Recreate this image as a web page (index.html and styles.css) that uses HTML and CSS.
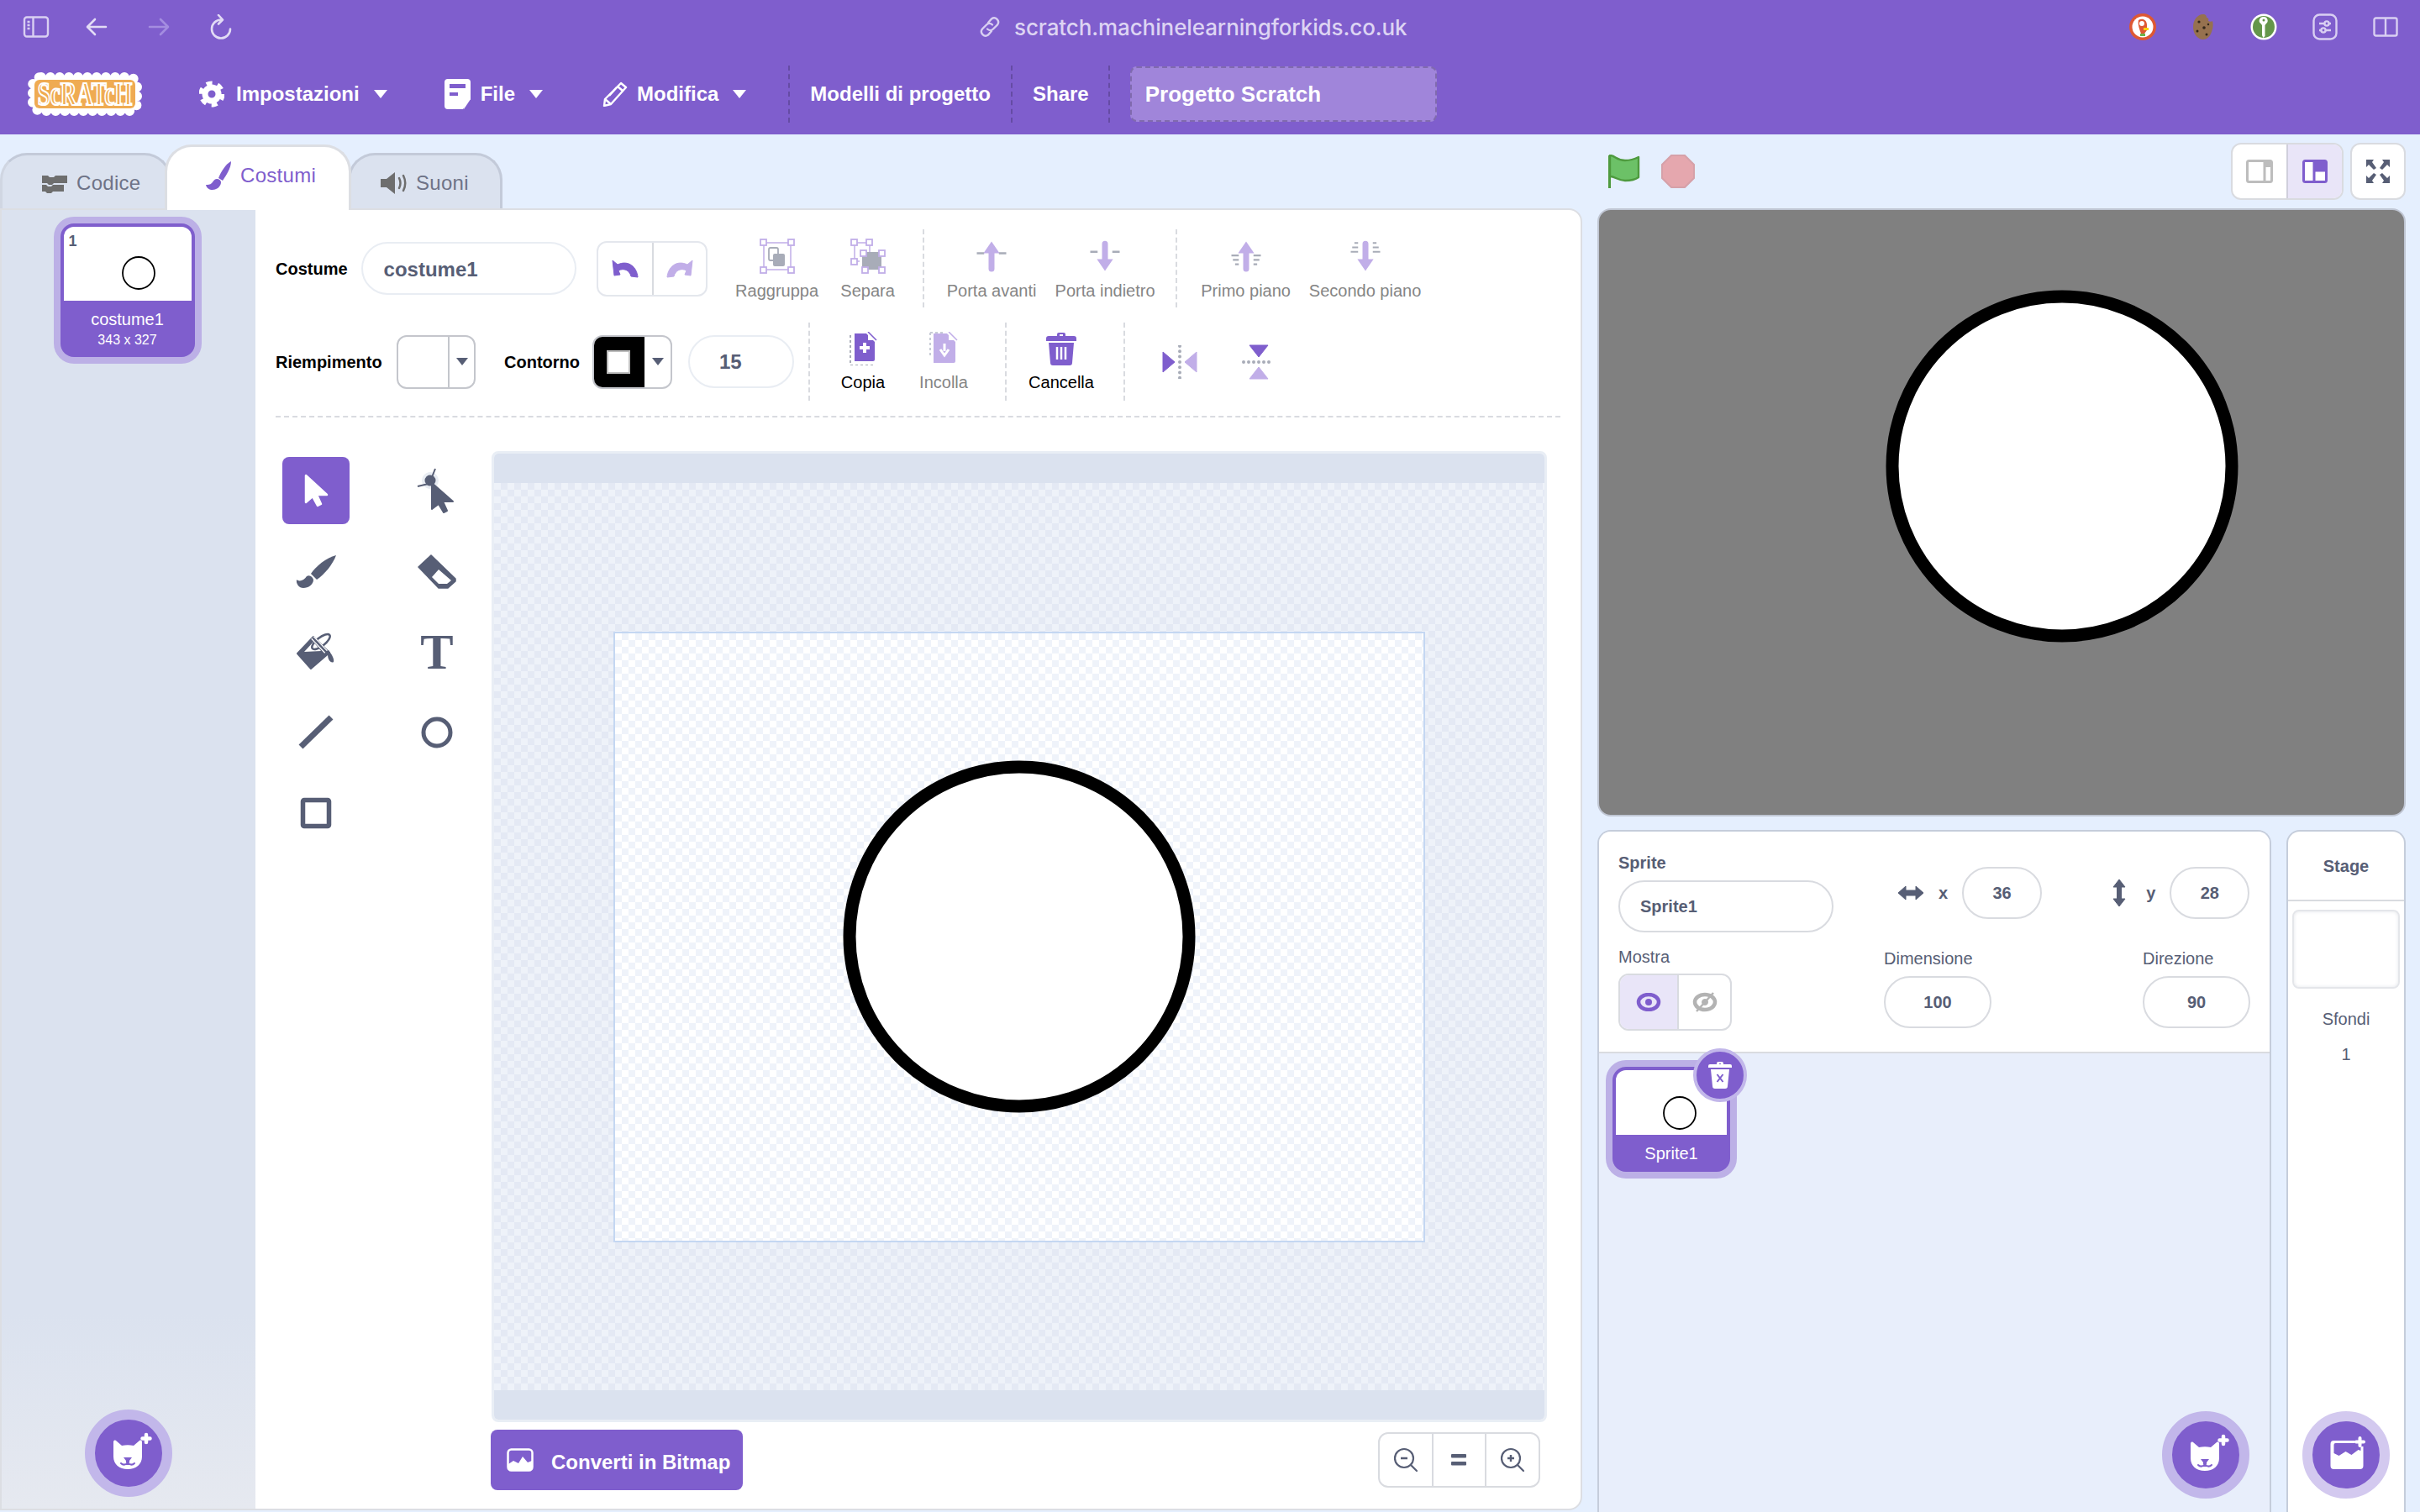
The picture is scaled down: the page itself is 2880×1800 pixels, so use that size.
FILE: index.html
```html
<!DOCTYPE html>
<html lang="it">

<head>
    <meta charset="UTF-8">
    <meta name="viewport" content="width=device-width, initial-scale=1.0">
    <title>Scratch</title>
    <link rel="stylesheet" href="styles.css">
</head>

<body>
    <!-- browser toolbar -->
    <div class="browser-bar">
        <div class="browser-left">
            <svg width="32" height="26" viewBox="0 0 32 26" fill="none" stroke="#d9cff2" stroke-width="2.4"><rect x="2" y="1.5" width="28" height="23" rx="3"/><path d="M12.5 2v22M5.5 7h3M5.5 11h3M5.5 15h3"/></svg>
            <svg class="back" width="26" height="24" viewBox="0 0 26 24" fill="none" stroke="#e2dbf5" stroke-width="2.6" stroke-linecap="round" stroke-linejoin="round"><path d="M24 12H3M11 3l-9 9 9 9"/></svg>
            <svg class="forward" width="26" height="24" viewBox="0 0 26 24" fill="none" stroke="#a48de0" stroke-width="2.6" stroke-linecap="round" stroke-linejoin="round"><path d="M2 12h21M15 3l9 9-9 9"/></svg>
            <svg class="reload" width="26" height="30" viewBox="0 0 26 30" fill="none" stroke="#e2dbf5" stroke-width="2.6" stroke-linecap="round" stroke-linejoin="round"><path d="M13 6.500a11 11 0 1 0 11 11M10 1l5 5.500-5 5"/></svg>
        </div>
        <div class="url">
            <svg width="28" height="28" viewBox="0 0 28 28" fill="none" stroke="#d9cff2" stroke-width="2.4" stroke-linecap="round"><path d="M12 9l4-4.500a5 5 0 0 1 7 7l-5 5a5 5 0 0 1-7 0"/><path d="M16 19l-4 4.500a5 5 0 0 1-7-7l5-5a5 5 0 0 1 7 0"/></svg>
            <span>scratch.machinelearningforkids.co.uk</span>
        </div>
        <div class="browser-right">
            <svg width="32" height="32" viewBox="0 0 32 32"><circle cx="16" cy="16" r="16" fill="#de5833"/><circle cx="16" cy="16" r="12.500" fill="#fff"/><path d="M11 8c4-3 10-1 10 6v6l-3 4h-4c-2-5-4-11-3-16z" fill="#de5833"/><circle cx="15" cy="12" r="3" fill="#fff"/><path d="M17 17h6v3h-6z" fill="#fdd20a"/><path d="M13 24h6v3h-6z" fill="#6bb34a"/></svg>
            <svg width="28" height="32" viewBox="0 0 28 32"><path d="M14 1c3 0 4 2 4 4 2 0 3 2 2 4 2 1 4 1 5 0 1 3 1 8-1 13-2 6-6 9-10 9-7 0-12-7-12-15C2 8 7 1 14 1z" fill="#96714f"/><circle cx="9" cy="10" r="1.600" fill="#33261a"/><circle cx="15" cy="17" r="1.800" fill="#33261a"/><circle cx="7" cy="21" r="1.500" fill="#33261a"/><circle cx="18" cy="25" r="1.500" fill="#33261a"/><circle cx="20" cy="13" r="1.200" fill="#33261a"/></svg>
            <svg width="32" height="32" viewBox="0 0 32 32"><circle cx="16" cy="16" r="15.500" fill="#fff"/><circle cx="16" cy="16" r="13" fill="#64964a"/><path d="M16 4a4.500 4.500 0 0 1 3 8l-1.500 2v13l-2 2-1.500-3V14l-1.500-2a4.500 4.500 0 0 1 3.500-8z" fill="#fff"/><circle cx="16" cy="8" r="1.500" fill="#64964a"/></svg>
            <svg width="30" height="32" viewBox="0 0 30 32" fill="none" stroke="#d9cff2" stroke-width="2.400"><rect x="1.500" y="1.500" width="27" height="29" rx="7"/><path d="M8 12h6M20 12h2M8 20h2M16 20h6"/><circle cx="17" cy="12" r="2.600"/><circle cx="13" cy="20" r="2.600"/></svg>
            <svg class="split" width="30" height="24" viewBox="0 0 30 24" fill="none" stroke="#d9cff2" stroke-width="2.400"><rect x="1.500" y="1.500" width="27" height="21" rx="2"/><path d="M15 2v20"/></svg>
        </div>
    </div>

    <!-- scratch menu -->
    <div class="menu-bar">
        <div class="logo">
            <svg class="logo-shape" width="136" height="52" viewBox="0 0 136 52">
                <rect x="6" y="6" width="124" height="40" rx="10" fill="#fff" stroke="#fff" stroke-width="12" stroke-linecap="round" stroke-dasharray="0 11"/>
                <rect x="8" y="9" width="120" height="34" rx="6" fill="#efab52"/>
            </svg>
            <span class="logo-text">ScRATcH</span>
        </div>
        <div class="menu-item settings">
            <svg width="30" height="34" viewBox="0 0 30 34" fill="none" stroke="#fff"><circle cx="15" cy="17" r="8" stroke-width="7"/><circle cx="15" cy="17" r="13" stroke-width="5" stroke-dasharray="7 6.610"/></svg>
            <span>Impostazioni</span>
            <i class="caret"></i>
        </div>
        <div class="menu-item file">
            <svg width="31" height="36" viewBox="0 0 31 36"><path d="M4 0h23a4 4 0 0 1 4 4v20l-9 12H4a4 4 0 0 1-4-4V4a4 4 0 0 1 4-4z" fill="#fff"/><path d="M6 6h19v5H6zM6 16h10v4H6z" fill="#7f5ecd"/><path d="M31 25l-3 10-5 1 3-11z" fill="#7f5ecd"/><path d="M24 24h7l-8 12z" fill="#fff"/></svg>
            <span>File</span>
            <i class="caret"></i>
        </div>
        <div class="menu-item edit">
            <svg width="30" height="30" viewBox="0 0 30 30" fill="none" stroke="#fff" stroke-width="2.400" stroke-linejoin="round"><path d="M22 2l6 5L10 27l-8 2 1-8z"/><path d="M18 6l6 5M3 21l7 6M8 17l9-10"/></svg>
            <span>Modifica</span>
            <i class="caret"></i>
        </div>
        <div class="menu-sep"></div>
        <div class="menu-link templates">Modelli di progetto</div>
        <div class="menu-sep"></div>
        <div class="menu-link share">Share</div>
        <div class="menu-sep"></div>
        <div class="project-title">Progetto Scratch</div>
    </div>

    <div class="main">
        <div class="left-col">
            <div class="tabs">
                <div class="tab tab-code">
                    <svg width="32" height="24" viewBox="0 0 32 24" fill="#6e6e6e"><path d="M1 3h7l2 2h5l2-2h14v9H15l-2 2H9l-2-2H1z"/><path d="M1 14h5l2 2h4l2-2h13v8H14l-2 2H7l-2-2H1z"/></svg>
                    <span>Codice</span>
                </div>
                <div class="tab tab-costumes">
                    <svg width="34" height="34" viewBox="0 0 34 34" fill="#7f5ecd"><path d="M32 0c-6 3-12 12-15 20l5 3C26 17 32 8 32 0z"/><path d="M15 21c-3 0-4 3-6 5-2 2-5 2-7 2 1 4 4 6 8 6 6 0 10-5 10-9 0-2-2-4-5-4z"/></svg>
                    <span>Costumi</span>
                </div>
                <div class="tab tab-sounds">
                    <svg width="32" height="26" viewBox="0 0 32 26"><path d="M0 8h7l10-8v26L7 18H0z" fill="#6e6e6e"/><path d="M22 7c2 4 2 8 0 12M27 4c3 6 3 12 0 18" fill="none" stroke="#6e6e6e" stroke-width="2.500" stroke-linecap="round"/></svg>
                    <span>Suoni</span>
                </div>
            </div>

            <div class="panel">
                <!-- lista costumi -->
                <div class="costume-list">
                    <div class="thumb costume-thumb">
                        <div class="thumb-inner">
                            <div class="thumb-image">
                                <span class="thumb-index">1</span>
                                <svg class="mini-circle" width="40" height="40" viewBox="0 0 40 40"><circle cx="20" cy="20" r="19" fill="#fff" stroke="#000" stroke-width="1.800"/></svg>
                            </div>
                            <div class="thumb-label">
                                <div>costume1</div>
                                <div class="thumb-size">343 x 327</div>
                            </div>
                        </div>
                    </div>
                    <div class="add-btn add-costume">
                        <svg width="56" height="54" viewBox="0 0 56 54"><use href="#cat"/></svg>
                    </div>
                </div>

                <!-- editor -->
                <div class="paint">
                    <div class="paint-row row-one">
                        <span class="label">Costume</span>
                        <div class="field name-field">costume1</div>
                        <div class="btn-group undo-group">
                            <div class="group-cell cell-66">
                                <svg width="32" height="24" viewBox="0 0 32 24"><path d="M1 2l2 18 7-1-2-5c6-3 13-1 15 7l8 1C30 10 20 1 7 7z" fill="#7f5ecd" stroke="#7f5ecd" stroke-linejoin="round"/></svg>
                            </div>
                            <div class="group-cell cell-66 cell-line">
                                <svg width="32" height="24" viewBox="0 0 32 24"><path d="M31 2l-2 18-7-1 2-5c-6-3-13-1-15 7l-8 1C2 10 12 1 25 7z" fill="#c1aee8" stroke="#c1aee8" stroke-linejoin="round"/></svg>
                            </div>
                        </div>

                        <div class="action w108 first-action off">
                            <svg width="42" height="42" viewBox="0 0 42 42" fill="none"><rect x="5" y="5" width="32" height="32" stroke="#c1aee8" stroke-width="1.500"/><rect x="11" y="11" width="11" height="15" rx="2" stroke="#a8acb8" stroke-width="1.800"/><rect x="16" y="18" width="14" height="15" rx="2" fill="#a8acb8"/><g fill="#fff" stroke="#c1aee8" stroke-width="1.800"><rect x="1" y="1" width="7" height="7"/><rect x="34" y="1" width="7" height="7"/><rect x="1" y="34" width="7" height="7"/><rect x="34" y="34" width="7" height="7"/></g></svg>
                            <span>Raggruppa</span>
                        </div>
                        <div class="action w108 off">
                            <svg width="42" height="42" viewBox="0 0 42 42" fill="none"><path d="M5 5h18v12M5 5v22h6" stroke="#c1aee8" stroke-width="1.500"/><rect x="14" y="16" width="23" height="21" fill="#a8acb8"/><g fill="#fff" stroke="#c1aee8" stroke-width="1.800"><rect x="1" y="1" width="7" height="7"/><rect x="19" y="1" width="7" height="7"/><rect x="1" y="24" width="7" height="7"/><rect x="12" y="14" width="7" height="7"/><rect x="34" y="14" width="7" height="7"/><rect x="14" y="34" width="7" height="7"/><rect x="34" y="34" width="7" height="7"/></g></svg>
                            <span>Separa</span>
                        </div>
                        <div class="vline vline-a"></div>
                        <div class="action w135 off">
                            <svg width="42" height="42" viewBox="-3 -3 48 48"><path d="M1 17h10M31 17h10" stroke="#a8acb8" stroke-width="3"/><path d="M21 1l11 16h-7v21a4 4 0 0 1-8 0V17h-7z" fill="#c1aee8"/></svg>
                            <span>Porta avanti</span>
                        </div>
                        <div class="action w135 off">
                            <svg width="42" height="42" viewBox="-3 -3 48 48"><path d="M1 15h10M31 15h10" stroke="#a8acb8" stroke-width="3"/><path d="M21 41L10 25h7V4a4 4 0 0 1 8 0v21h7z" fill="#c1aee8"/></svg>
                            <span>Porta indietro</span>
                        </div>
                        <div class="vline vline-b"></div>
                        <div class="action w142 off">
                            <svg width="42" height="42" viewBox="-3 -3 48 48"><path d="M1 20h10M31 20h10M3 26h8M31 26h8M6 32h5M31 32h5" stroke="#a8acb8" stroke-width="2.500"/><path d="M21 1l11 16h-7v21a4 4 0 0 1-8 0V17h-7z" fill="#c1aee8"/></svg>
                            <span>Primo piano</span>
                        </div>
                        <div class="action w142 off">
                            <svg width="42" height="42" viewBox="-3 -3 48 48"><path d="M1 15h10M31 15h10M3 9h8M31 9h8M6 3h5M31 3h5" stroke="#a8acb8" stroke-width="2.500"/><path d="M21 41L10 25h7V4a4 4 0 0 1 8 0v21h7z" fill="#c1aee8"/></svg>
                            <span>Secondo piano</span>
                        </div>
                    </div>

                    <div class="paint-row row-two">
                        <span class="label fill-label">Riempimento</span>
                        <div class="btn-group swatch">
                            <div class="swatch-color"></div>
                            <div class="swatch-arrow"><i class="mini-caret"></i></div>
                        </div>
                        <span class="label stroke-label">Contorno</span>
                        <div class="btn-group swatch stroke-swatch">
                            <div class="swatch-color"><i class="stroke-hole"></i></div>
                            <div class="swatch-arrow"><i class="mini-caret"></i></div>
                        </div>
                        <div class="field width-field">15</div>
                        <div class="vline vline-c"></div>

                        <div class="action w96 copy-action">
                            <svg width="36" height="40" viewBox="0 0 36 40"><path d="M8 2h14l10 10v21a2 2 0 0 1-2 2H8z" fill="#7f5ecd"/><path d="M24 1l9 9h-9z" fill="#fff"/><path d="M24 0l10 10" stroke="#7f5ecd" stroke-width="1.500"/><path d="M20 13v12M14 19h12" stroke="#fff" stroke-width="4"/><path d="M3 4v36h28" fill="none" stroke="#a8acb8" stroke-width="2" stroke-dasharray="3 3"/></svg>
                            <span>Copia</span>
                        </div>
                        <div class="action w96 off">
                            <svg width="36" height="40" viewBox="0 0 36 40"><path d="M6 2h16l10 10v23a2 2 0 0 1-2 2H6z" fill="#c1aee8"/><path d="M24 1l9 9h-9z" fill="#fff"/><path d="M24 0l10 10" stroke="#c1aee8" stroke-width="1.500"/><path d="M19 14v9M14 21l5 7 5-7" fill="none" stroke="#fff" stroke-width="3"/><path d="M2 1h18M2 1v30" fill="none" stroke="#c8ccd6" stroke-width="2" stroke-dasharray="3 3"/></svg>
                            <span>Incolla</span>
                        </div>
                        <div class="vline vline-d"></div>
                        <div class="action w96 delete-action">
                            <svg width="38" height="40" viewBox="0 0 38 40" fill="#7f5ecd"><path d="M14 5V3a2 2 0 0 1 2-2h6a2 2 0 0 1 2 2v2h10a3 3 0 0 1 3 3v3H1V8a3 3 0 0 1 3-3zm3 0h4V3h-4z"/><path d="M4 13h30l-2 24a3 3 0 0 1-3 3H9a3 3 0 0 1-3-3z"/><path d="M14 18v15M19 18v15M24 18v15" stroke="#fff" stroke-width="2.500"/></svg>
                            <span>Cancella</span>
                        </div>
                        <div class="vline vline-e"></div>
                        <div class="action w96 flip-action">
                            <svg width="42" height="40" viewBox="0 0 42 40"><path d="M1 8l14 12L1 32z" fill="#7f5ecd" stroke="#7f5ecd" stroke-linejoin="round"/><path d="M41 8L27 20l14 12z" fill="#c1aee8" stroke="#c1aee8" stroke-linejoin="round"/><path d="M21 1v38" stroke="#a8acb8" stroke-width="4" stroke-linecap="round" stroke-dasharray="0 6.300"/></svg>
                        </div>
                        <div class="action w96 flip-action">
                            <svg width="40" height="42" viewBox="0 0 40 42"><path d="M9 1l11 14L31 1z" fill="#7f5ecd" stroke="#7f5ecd" stroke-linejoin="round"/><path d="M9 41l11-14 11 14z" fill="#c1aee8" stroke="#c1aee8" stroke-linejoin="round"/><path d="M2 21h36" stroke="#a8acb8" stroke-width="4" stroke-linecap="round" stroke-dasharray="0 6"/></svg>
                        </div>
                    </div>

                    <div class="dash-line"></div>

                    <div class="paint-body">
                        <div class="tools">
                            <div class="tool active">
                                <svg width="80" height="80" viewBox="0 0 80 80"><path d="M28 22v32l8-7 6 11 4-2-5-11h12z" fill="#fff" stroke="#fff" stroke-width="2.500" stroke-linejoin="round"/></svg>
                            </div>
                            <div class="tool">
                                <svg width="80" height="80" viewBox="0 0 80 80"><circle cx="32" cy="28" r="10" fill="#e9edf3"/><path d="M17 35l13-3M34 24l4-10" stroke="#575e75" stroke-width="2"/><circle cx="32" cy="28" r="6.500" fill="#575e75"/><path d="M34 31v31l8-6 6 10 4-2-5-11h12z" fill="#575e75" stroke="#575e75" stroke-width="2" stroke-linejoin="round"/></svg>
                            </div>
                            <div class="tool">
                                <svg width="80" height="80" viewBox="0 0 80 80" fill="#575e75"><path d="M64 21C52 24 40 34 34 43l7 7c9-6 19-18 23-29z"/><path d="M17 50c3 3 9 1 12-4 4-2 7 1 8 4 0 6-6 10-12 10-5 0-9-5-8-10z"/></svg>
                            </div>
                            <div class="tool">
                                <svg width="80" height="80" viewBox="0 0 80 80"><path d="M33 21l29 28v3l-9 8H42L18 35z" fill="#575e75" stroke="#575e75" stroke-width="1.500" stroke-linejoin="round"/><path d="M42 38l15 13-5 4H42l-8-8z" fill="#fff"/></svg>
                            </div>
                            <div class="tool">
                                <svg width="80" height="80" viewBox="0 0 80 80" fill="none"><path d="M37 22L18 42l16 18 22-19z" fill="#575e75" stroke="#575e75" stroke-width="2" stroke-linejoin="round"/><path d="M37 28L26 40l20-1z" fill="#fff"/><ellipse cx="46" cy="28" rx="13" ry="5" transform="rotate(-38 46 28)" stroke="#575e75" stroke-width="2.500"/><path d="M36 23l16 17" stroke="#fff" stroke-width="5"/><path d="M36 23l17 18" stroke="#575e75" stroke-width="2.500"/><path d="M55 38c4 5 7 11 6 14-3 2-7-2-7-9z" fill="#575e75"/></svg>
                            </div>
                            <div class="tool tool-text">T</div>
                            <div class="tool">
                                <svg width="80" height="80" viewBox="0 0 80 80"><path d="M22 57l36-35" stroke="#575e75" stroke-width="7"/></svg>
                            </div>
                            <div class="tool">
                                <svg width="80" height="80" viewBox="0 0 80 80"><circle cx="40" cy="40" r="16" fill="none" stroke="#575e75" stroke-width="5"/></svg>
                            </div>
                            <div class="tool">
                                <svg width="80" height="80" viewBox="0 0 80 80"><rect x="24.500" y="24.500" width="31" height="31" rx="1.500" fill="none" stroke="#575e75" stroke-width="5.500"/></svg>
                            </div>
                        </div>

                        <div class="canvas-col">
                            <div class="canvas">
                                <div class="canvas-band"></div>
                                <div class="canvas-area">
                                    <div class="artboard">
                                        <svg width="420" height="420" viewBox="0 0 420 420"><circle cx="210" cy="210" r="202" fill="#fff" stroke="#000" stroke-width="15"/></svg>
                                    </div>
                                </div>
                                <div class="canvas-band"></div>
                            </div>
                            <div class="canvas-bottom">
                                <div class="convert-btn">
                                    <svg width="32" height="28" viewBox="0 0 32 28"><rect x="1.500" y="1.500" width="29" height="25" rx="4" fill="none" stroke="#fff" stroke-width="2.500"/><path d="M2 26v-7l6-4 6 3 5-8 6 7 5-2v11z" fill="#fff"/></svg>
                                    <span>Converti in Bitmap</span>
                                </div>
                                <div class="btn-group zoom-group">
                                    <div class="group-cell cell-64">
                                        <svg width="30" height="30" viewBox="0 0 30 30" fill="none" stroke="#575e75"><circle cx="13" cy="13" r="11" stroke-width="2.200"/><path d="M21 21l7 7" stroke-width="2.200" stroke-linecap="round"/><path d="M9 13h8" stroke-width="2.400"/></svg>
                                    </div>
                                    <div class="group-cell cell-64 cell-line">
                                        <svg width="22" height="16" viewBox="0 0 22 16" fill="#575e75"><rect x="1" y="1" width="18" height="4.500" rx="1"/><rect x="1" y="10" width="18" height="4.500" rx="1"/></svg>
                                    </div>
                                    <div class="group-cell cell-64 cell-line">
                                        <svg width="30" height="30" viewBox="0 0 30 30" fill="none" stroke="#575e75"><circle cx="13" cy="13" r="11" stroke-width="2.200"/><path d="M21 21l7 7" stroke-width="2.200" stroke-linecap="round"/><path d="M9 13h8M13 9v8" stroke-width="2.400"/></svg>
                                    </div>
                                </div>
                            </div>
                        </div>
                    </div>
                </div>
            </div>
        </div>

        <div class="right-col">
            <div class="stage-header">
                <svg class="flag" width="38" height="40" viewBox="0 0 38 40"><path d="M2 1c6 0 8 6 18 6 6 0 12-2 16-4v24c-4 3-10 4-16 4C12 31 8 26 2 26z" fill="#6cc167" stroke="#4e9a3e" stroke-width="2.400" stroke-linejoin="round"/><path d="M1.500 1v39" stroke="#4e9a3e" stroke-width="3"/></svg>
                <svg class="stop" width="40" height="40" viewBox="0 0 40 40"><path d="M12 1h16l11 11v16L28 39H12L1 28V12z" fill="#e5a7ae" stroke="#d6a1a9" stroke-width="2"/></svg>
                <div class="btn-group layout-group">
                    <div class="group-cell cell-layout">
                        <svg width="32" height="28" viewBox="0 0 32 28"><rect x="1.500" y="1.500" width="29" height="25" rx="2" fill="#fff" stroke="#bdbdbd" stroke-width="3"/><path d="M22 2h8v7h-8z" fill="#bdbdbd"/><path d="M22 2v25" stroke="#bdbdbd" stroke-width="3"/></svg>
                    </div>
                    <div class="group-cell cell-layout layout-on">
                        <svg width="30" height="28" viewBox="0 0 30 28"><rect x="1.500" y="1.500" width="27" height="25" rx="2" fill="#fff" stroke="#7f5ecd" stroke-width="3"/><path d="M14 2h14v11H14z" fill="#7f5ecd"/><path d="M14 2v25M14 13h15" stroke="#7f5ecd" stroke-width="3"/></svg>
                    </div>
                </div>
                <div class="btn-group full-btn">
                    <svg width="30" height="30" viewBox="0 0 30 30" fill="#575e75"><path d="M1 1h9l-2 3 5 7-3 2-6-6-3 3zM29 1h-9l2 3-5 7 3 2 6-6 3 3zM1 29h9l-2-3 5-7-3-2-6 6-3-3zM29 29h-9l2-3-5-7 3-2 6 6 3-3z"/></svg>
                </div>
            </div>

            <div class="stage">
                <svg width="958" height="720" viewBox="0 0 958 720"><circle cx="551" cy="305" r="202" fill="#fff" stroke="#000" stroke-width="15"/></svg>
            </div>

            <div class="bottom-row">
                <div class="sprite-panel">
                    <div class="sprite-info">
                        <div class="info-row">
                            <div class="info-name">
                                <div class="info-label bold">Sprite</div>
                                <div class="field info-field name-input">Sprite1</div>
                            </div>
                            <div class="coord coord-x">
                                <svg width="32" height="20" viewBox="0 0 32 20" fill="#575e75"><path d="M1 10l9-8v5h12V2l9 8-9 8v-5H10v5z" stroke="#575e75" stroke-linejoin="round"/></svg>
                                <span class="coord-label">x</span>
                                <div class="field info-field num-small">36</div>
                            </div>
                            <div class="coord coord-y">
                                <svg width="16" height="34" viewBox="0 0 16 34" fill="#575e75"><path d="M8 1l7 9h-4.500v14H15l-7 9-7-9h4.500V10H1z" stroke="#575e75" stroke-linejoin="round"/></svg>
                                <span class="coord-label">y</span>
                                <div class="field info-field num-small">28</div>
                            </div>
                        </div>
                        <div class="info-row row-lower">
                            <div class="info-show">
                                <div class="info-label">Mostra</div>
                                <div class="btn-group show-group">
                                    <div class="group-cell show-on">
                                        <svg width="30" height="22" viewBox="0 0 30 22"><ellipse cx="15" cy="11" rx="12" ry="9" fill="none" stroke="#7f5ecd" stroke-width="4.500"/><circle cx="15" cy="11" r="4" fill="#7f5ecd"/></svg>
                                    </div>
                                    <div class="group-cell cell-line show-off">
                                        <svg width="30" height="24" viewBox="0 0 30 24" fill="none" stroke="#b3b3b3"><ellipse cx="15" cy="12" rx="12" ry="9" stroke-width="4.500"/><circle cx="15" cy="12" r="3.500" fill="#b3b3b3"/><path d="M25 1L5 23" stroke-width="2.500"/></svg>
                                    </div>
                                </div>
                            </div>
                            <div class="info-size">
                                <div class="info-label">Dimensione</div>
                                <div class="field info-field num-wide">100</div>
                            </div>
                            <div class="info-dir">
                                <div class="info-label">Direzione</div>
                                <div class="field info-field num-wide">90</div>
                            </div>
                        </div>
                    </div>
                    <div class="sprite-list">
                        <div class="thumb sprite-thumb">
                            <div class="thumb-inner">
                                <div class="thumb-image">
                                    <svg class="mini-circle" width="40" height="40" viewBox="0 0 40 40"><circle cx="20" cy="20" r="19" fill="#fff" stroke="#000" stroke-width="1.800"/></svg>
                                </div>
                                <div class="thumb-label">Sprite1</div>
                            </div>
                            <div class="delete-badge">
                                <svg width="28" height="32" viewBox="0 0 28 32" fill="#fff"><path d="M10 3V2a2 2 0 0 1 2-2h4a2 2 0 0 1 2 2v1h8a2 2 0 0 1 2 2v2H0V5a2 2 0 0 1 2-2zm3 0h2V2h-2z"/><path d="M3 9h22l-2 20a3 3 0 0 1-3 3H8a3 3 0 0 1-3-3z"/><path d="M10.500 15l7 9M17.500 15l-7 9" stroke="#7f5ecd" stroke-width="2"/></svg>
                            </div>
                        </div>
                        <div class="add-btn add-sprite">
                            <svg width="56" height="54" viewBox="0 0 56 54"><use href="#cat"/></svg>
                        </div>
                    </div>
                </div>

                <div class="stage-panel">
                    <div class="stage-title">Stage</div>
                    <div class="backdrop-thumb"></div>
                    <div class="stage-text sfondi">Sfondi</div>
                    <div class="stage-text">1</div>
                    <div class="add-btn add-backdrop">
                        <svg width="44" height="38" viewBox="-2.500 2 44 38"><path d="M5 4h25v3H7a2 2 0 0 0-2 2v10l6 3 8-5 7 4 8-6 3 1V11h3v23a4 4 0 0 1-4 4H5a4 4 0 0 1-4-4V8a4 4 0 0 1 4-4z" fill="#fff"/><path d="M36 1v9M31.500 5.500h9" stroke="#fff" stroke-width="4" stroke-linecap="round"/></svg>
                    </div>
                </div>
            </div>
        </div>
    </div>

    <!-- gatto del pulsante aggiungi -->
    <svg class="defs" width="0" height="0">
        <symbol id="cat" viewBox="-3 4 56 54" overflow="visible">
            <path d="M7 18c0-2 1-3 3-2l7 6c5-1 9-1 14 0l7-6c2-1 3 0 3 2v17c0 9-7 15-17 15S7 44 7 35z" fill="#fff"/>
            <path d="M19 36h10l-3 4v2c-1 2-3 2-4 0v-2z" fill="#7f5ecd"/>
            <path d="M16 43c2 2 5 2 8 0 3 2 6 2 8 0" fill="none" stroke="#7f5ecd" stroke-width="2" stroke-linecap="round"/>
            <path d="M46 9v9M41.500 13.500h9" stroke="#fff" stroke-width="4.500" stroke-linecap="round"/>
        </symbol>
    </svg>
</body>

</html>
```

FILE: styles.css
```css
* {
    box-sizing: border-box;
}

body {
    margin: 0;
    width: 2880px;
    height: 1800px;
    overflow: hidden;
    background-color: #e5effe;
    font-family: "Liberation Sans", Arial, sans-serif;
    font-size: 20px;
    color: #575e75;
}

svg {
    display: block;
    flex-shrink: 0;
}

.defs {
    position: absolute;
}

/* browser toolbar */
.browser-bar {
    height: 64px;
    display: flex;
    align-items: center;
    background-color: #7f5ecd;
}

.browser-left {
    display: flex;
    align-items: center;
    width: 1164px;
    padding-left: 27px;
}

.browser-left .back {
    margin-left: 43px;
}

.browser-left .forward {
    margin-left: 48px;
}

.browser-left .reload {
    margin-left: 48px;
}

.url {
    display: flex;
    align-items: center;
    gap: 15px;
    width: 1370px;
    font-family: Inter, "Liberation Sans", sans-serif;
    font-size: 26px;
    font-weight: 500;
    letter-spacing: -.1px;
    color: #ddd4f3;
}

.browser-right {
    display: flex;
    align-items: center;
    gap: 42px;
}

/* scratch menu */
.menu-bar {
    height: 96px;
    display: flex;
    align-items: center;
    padding-left: 33px;
    background-color: #7f5ecd;
    font-size: 24px;
    font-weight: bold;
    color: #fff;
}

.logo {
    position: relative;
    display: flex;
    align-items: center;
    justify-content: center;
    width: 136px;
    height: 52px;
}

.logo-shape {
    position: absolute;
    top: 0;
    left: 0;
}

.logo-text {
    position: relative;
    font-family: "Liberation Serif", serif;
    font-size: 27px;
    line-height: 30px;
    font-weight: bold;
    color: #efab52;
    -webkit-text-stroke: 1.500px #fff;
    transform: scaleY(1.45);
}

.menu-item {
    display: flex;
    align-items: center;
}

.menu-item span {
    margin-left: 14px;
}

.settings {
    margin-left: 68px;
}

.file {
    margin-left: 68px;
}

.file span {
    margin-left: 12px;
}

.edit {
    margin-left: 71px;
}

.edit span {
    margin-left: 11px;
}

.caret {
    width: 0;
    height: 0;
    margin-left: 17px;
    border-left: 8px solid transparent;
    border-right: 8px solid transparent;
    border-top: 10px solid #fff;
}

.menu-sep {
    width: 0;
    height: 68px;
    border-left: 2px dashed rgba(0, 0, 0, .2);
}

.edit + .menu-sep {
    margin-left: 50px;
}

.menu-link.templates {
    margin: 0 24px 0 24px;
}

.menu-link.share {
    margin: 0 23px 0 24px;
}

.project-title {
    width: 365px;
    height: 66px;
    margin-left: 24px;
    padding-left: 16px;
    line-height: 62px;
    font-size: 26px;
    background-color: #a085da;
    border: 2px dashed rgba(0, 0, 0, .2);
    border-radius: 8px;
}

/* page columns */
.main {
    height: 1640px;
    display: grid;
    grid-template-columns: 1883px 962px;
    column-gap: 18px;
}

.left-col {
    display: flex;
    flex-direction: column;
    height: 1638px;
}

/* tabs */
.tabs {
    height: 88px;
    display: flex;
    align-items: flex-end;
}

.tab {
    display: flex;
    align-items: center;
    height: 68px;
    margin-bottom: -2px;
    background-color: #dbe2ef;
    border: 3px solid #c3cad9;
    border-bottom: none;
    border-radius: 32px 32px 0 0;
    font-size: 24px;
    letter-spacing: .3px;
    color: #6e7387;
}

.tab-code {
    width: 204px;
    padding-left: 46px;
    gap: 10px;
    border-left-color: #d0d6e2;
}

.tab-costumes {
    position: relative;
    z-index: 1;
    width: 222px;
    height: 78px;
    margin-left: -8px;
    padding: 0 0 8px 44px;
    gap: 9px;
    background-color: #fff;
    border-color: #dcdee3;
    color: #7f5ecd;
}

.tab-sounds {
    width: 184px;
    margin-left: -4px;
    padding-left: 36px;
    gap: 10px;
}

/* main panel */
.panel {
    flex: 1;
    display: flex;
    min-height: 0;
    background-color: #fff;
    border: 2px solid #dcdee3;
    border-radius: 0 16px 16px 0;
}

.costume-list {
    width: 302px;
    display: flex;
    flex-direction: column;
    align-items: center;
    padding-top: 8px;
    background: linear-gradient(#dbe2ef 85%, #e6e9f0);
}

/* thumbnails */
.thumb {
    position: relative;
    padding: 8px;
    background-color: #bcb0e6;
    border-radius: 24px;
}

.costume-thumb {
    width: 176px;
    height: 175px;
    margin-left: -3px;
}

.thumb-inner {
    height: 100%;
    display: flex;
    flex-direction: column;
    overflow: hidden;
    background-color: #7f5ecd;
    border-radius: 16px;
    padding: 4px 4px 0;
}

.thumb-image {
    position: relative;
    flex: 1;
    background-color: #fff;
    border-radius: 12px 12px 0 0;
}

.thumb-index {
    position: absolute;
    top: 7px;
    left: 6px;
    font-size: 18px;
    font-weight: bold;
}

.mini-circle {
    position: absolute;
    left: 69px;
    top: 35px;
}

.thumb-label {
    text-align: center;
    color: #fff;
    line-height: 24px;
}

.costume-thumb .thumb-label {
    height: 67px;
    padding-top: 10px;
}

.thumb-size {
    font-size: 16px;
    padding-top: 1px;
}

.add-btn {
    display: flex;
    align-items: center;
    justify-content: center;
    width: 104px;
    height: 104px;
    margin-top: auto;
    background-color: #7f5ecd;
    border: 12px solid #c2b7ea;
    border-radius: 50%;
}

.add-btn svg {
    width: 56px;
    height: 54px;
    overflow: visible;
}

.add-costume {
    margin-bottom: 14px;
}

/* paint editor */
.paint {
    flex: 1;
    min-width: 0;
    padding-top: 23px;
}

.paint-row {
    display: flex;
    align-items: center;
    height: 93px;
    padding-left: 24px;
}

.row-two {
    margin-top: 18px;
}

.label {
    padding-top: 2px;
    font-weight: bold;
    color: #000;
}

.field {
    display: flex;
    align-items: center;
    background-color: #fff;
    border: 2px solid #e9edf3;
    border-radius: 32px;
    font-weight: bold;
}

.name-field {
    width: 256px;
    height: 63px;
    margin-left: 16px;
    padding: 2px 0 0 25px;
    font-size: 24px;
}

.btn-group {
    display: flex;
    background-color: #fff;
    border: 2px solid #d9dbe0;
    border-radius: 12px;
    overflow: hidden;
}

.group-cell {
    display: flex;
    align-items: center;
    justify-content: center;
}

.cell-line {
    border-left: 2px solid #d9dbe0;
}

.cell-66 {
    width: 64px;
}

.undo-group {
    height: 66px;
    margin-left: 24px;
    border-color: #e4e7ed;
}

.action {
    display: flex;
    flex-direction: column;
    align-items: center;
    height: 93px;
    padding-top: 11px;
    color: #000;
    white-space: nowrap;
}

.action span {
    margin-top: 8px;
    line-height: 24px;
}

.action.off span {
    color: #858585;
}

.w96 {
    width: 96px;
}

.w108 {
    width: 108px;
}

.w135 {
    width: 135px;
}

.w142 {
    width: 142px;
}

.first-action {
    margin-left: 29px;
}

.vline {
    width: 0;
    height: 93px;
    border-left: 2px dashed #d9dbe0;
}

.vline-a {
    margin: 0 13px 0 11px;
}

.vline-b {
    margin: 0 11px 0 16px;
}

.fill-label {
    width: 144px;
}

.swatch {
    width: 94px;
    height: 64px;
    border-color: #c4c6cc;
}

.swatch-color {
    width: 61px;
    border-right: 2px solid #c4c6cc;
}

.swatch-arrow {
    flex: 1;
    display: flex;
    align-items: center;
    justify-content: center;
}

.mini-caret {
    width: 0;
    height: 0;
    border-left: 7px solid transparent;
    border-right: 7px solid transparent;
    border-top: 9px solid #575e75;
}

.stroke-label {
    width: 105px;
    margin-left: 34px;
}

.stroke-swatch {
    width: 95px;
}

.stroke-swatch .swatch-color {
    display: flex;
    align-items: center;
    justify-content: center;
    width: 62px;
    margin: -2px 0 -2px -2px;
    background-color: #000;
    border-right: none;
}

.stroke-hole {
    width: 28px;
    height: 28px;
    background-color: #fff;
    border: 2px solid #bdbdbd;
}

.width-field {
    width: 126px;
    height: 63px;
    margin-left: 19px;
    padding-left: 35px;
    font-size: 24px;
}

.vline-c {
    margin: 0 15px 0 17px;
}

.vline-d {
    margin: 0 17px 0 25px;
}

.vline-e {
    margin: 0 17px 0 26px;
}

.flip-action {
    justify-content: center;
    padding-top: 0;
}

.flip-action + .flip-action {
    margin-left: -2px;
}

.dash-line {
    height: 0;
    margin: 18px 24px 0;
    border-top: 2px dashed #d9dbe0;
}

.paint-body {
    display: flex;
    padding-left: 32px;
    margin-top: 40px;
}

/* tool buttons */
.tools {
    display: grid;
    grid-template-columns: 80px 80px;
    grid-auto-rows: 80px;
    column-gap: 64px;
    row-gap: 16px;
    width: 249px;
    margin-top: 7px;
}

.tool {
    border-radius: 8px;
}

.tool.active {
    background-color: #7f5ecd;
}

.tool-text {
    text-align: center;
    line-height: 80px;
    font-family: "Liberation Serif", serif;
    font-size: 59px;
    font-weight: bold;
}

/* canvas */
.canvas-col {
    width: 1256px;
}

.canvas {
    height: 1156px;
    display: flex;
    flex-direction: column;
    border: 3px solid #e9eef5;
    border-radius: 8px;
    overflow: hidden;
}

.canvas-band {
    height: 35px;
    background-color: #dbe2ef;
}

.canvas-area {
    flex: 1;
    display: flex;
    align-items: center;
    justify-content: center;
    background: repeating-conic-gradient(#e4e9f4 0 25%, #eef2f9 0 50%) 0 0 / 16px 16px;
}

.artboard {
    display: flex;
    align-items: center;
    justify-content: center;
    width: 966px;
    height: 727px;
    background: repeating-conic-gradient(#eff3fa 0 25%, #fff 0 50%) 0 0 / 16px 16px;
    border: 2px solid #c4d7f2;
}

.canvas-bottom {
    display: flex;
    justify-content: space-between;
    align-items: center;
    height: 72px;
    margin-top: 9px;
    padding-right: 8px;
}

.convert-btn {
    display: flex;
    align-items: center;
    gap: 21px;
    width: 300px;
    height: 72px;
    margin-left: -1px;
    padding-left: 19px;
    font-size: 24px;
    font-weight: bold;
    color: #fff;
    background-color: #7f5ecd;
    border-radius: 8px;
}

.convert-btn span {
    padding-top: 6px;
}

.zoom-group {
    height: 66px;
    width: 193px;
}

.cell-64 {
    flex: 1;
}

/* stage side */
.right-col {
    display: flex;
    flex-direction: column;
}

.stage-header {
    height: 88px;
    display: flex;
    align-items: center;
    padding-left: 13px;
}

.stage-header .stop {
    margin-left: 25px;
}

.layout-group {
    width: 134px;
    height: 68px;
    margin-left: auto;
}

.cell-layout {
    flex: 1;
}

.layout-on {
    background-color: #e9e5f8;
    border-left: 2px solid #d0cfdc;
}

.full-btn {
    width: 66px;
    height: 68px;
    margin-left: 8px;
    align-items: center;
    justify-content: center;
}

.stage {
    width: 962px;
    height: 724px;
    overflow: hidden;
    background-color: #808080;
    border: 2px solid #c0c6d3;
    border-radius: 16px;
}

.bottom-row {
    flex: 1;
    display: flex;
    margin-top: 16px;
    min-height: 0;
}

/* sprite panel */
.sprite-panel {
    width: 802px;
    display: flex;
    flex-direction: column;
    background-color: #e8eefb;
    border: 2px solid #c5cddb;
    border-bottom: none;
    border-radius: 16px 16px 0 0;
    overflow: hidden;
}

.sprite-info {
    height: 264px;
    padding: 25px 0 0 23px;
    background-color: #fff;
    border-bottom: 2px solid #d9dbe0;
}

.info-row {
    display: flex;
    align-items: flex-start;
}

.row-lower {
    margin-top: 17px;
}

.info-label {
    line-height: 24px;
}

.info-label.bold {
    font-weight: bold;
}

.info-field {
    justify-content: center;
    height: 62px;
    border-color: #d9dbe0;
}

.name-input {
    justify-content: flex-start;
    width: 256px;
    margin-top: 9px;
    padding: 1px 0 0 24px;
}

.coord {
    display: flex;
    align-items: center;
    margin-top: 17px;
}

.coord-x {
    margin-left: 76px;
}

.coord-y {
    margin-left: 84px;
}

.coord-label {
    font-weight: bold;
    margin: 0 17px;
    line-height: 62px;
}

.coord-y .coord-label {
    margin: 0 17px 0 24px;
}

.num-small {
    width: 95px;
}

.num-wide {
    width: 128px;
    margin-top: 9px;
}

.info-show {
    width: 316px;
}

.show-group {
    width: 135px;
    height: 68px;
    margin-top: 8px;
}

.show-on {
    width: 68px;
    background-color: #e9e5f8;
}

.show-off {
    flex: 1;
}

.info-size {
    width: 308px;
    margin-top: 2px;
}

.info-dir {
    margin-top: 2px;
}

.sprite-list {
    flex: 1;
    position: relative;
    display: flex;
    flex-direction: column;
    align-items: flex-start;
    padding: 8px 24px 16px 8px;
}

.sprite-thumb {
    width: 156px;
    height: 141px;
}

.sprite-thumb .thumb-label {
    height: 44px;
    line-height: 44px;
}

.sprite-thumb .mini-circle {
    left: 56px;
    top: 31px;
}

.delete-badge {
    position: absolute;
    top: -14px;
    right: -12px;
    display: flex;
    align-items: center;
    justify-content: center;
    width: 64px;
    height: 64px;
    background-color: #7f5ecd;
    border: 4px solid #c2b7ea;
    border-radius: 50%;
}

.add-sprite {
    align-self: flex-end;
}

/* stage selector */
.stage-panel {
    width: 142px;
    margin-left: 18px;
    display: flex;
    flex-direction: column;
    align-items: center;
    padding-bottom: 16px;
    background-color: #fff;
    border: 2px solid #c5cddb;
    border-bottom: none;
    border-radius: 16px 16px 0 0;
}

.stage-title {
    width: 100%;
    height: 83px;
    padding-top: 30px;
    text-align: center;
    font-weight: bold;
    border-bottom: 2px solid #d9dbe0;
}

.backdrop-thumb {
    width: 128px;
    height: 94px;
    margin-top: 10px;
    background-color: #fff;
    border: 2px solid #e4e6ea;
    border-radius: 8px;
    box-shadow: inset 0 0 4px #e4e6ea;
}

.stage-text {
    line-height: 24px;
    margin-top: 18px;
}

.stage-text.sfondi {
    margin-top: 24px;
}

.add-backdrop {
    border-color: #d3c9ef;
}

.add-backdrop svg {
    width: 44px;
    height: 38px;
}
```
